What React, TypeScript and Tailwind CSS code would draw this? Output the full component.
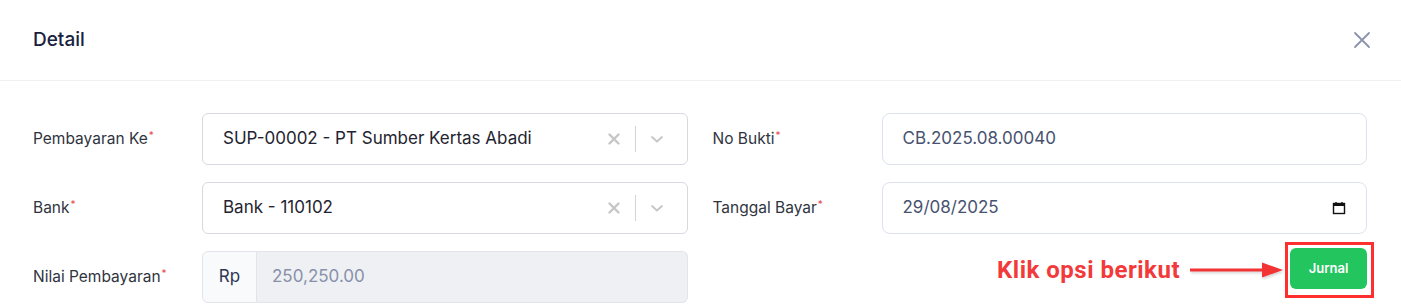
import React from "react";

const Label: React.FC<{ text: string }> = ({ text }) => (
  <div className="w-[169px] shrink-0 text-[15.5px] text-[#2f3440]">
    {text}
    <sup className="text-[#e5484d] text-[10px] ml-[1px]">*</sup>
  </div>
);

const SelectBox: React.FC<{ value: string }> = ({ value }) => (
  <div className="flex-1 h-[52px] flex items-center border border-[#d6d9df] rounded-md bg-white">
    <div className="flex-1 pl-[20px] text-[17px] text-[#1f2430]">{value}</div>
    <div className="flex items-center pr-[20px] text-[#c6c6c6]">
      <svg width="20" height="20" viewBox="0 0 20 20">
        <path
          d="M5.5 5.5l9 9M14.5 5.5l-9 9"
          stroke="currentColor"
          strokeWidth="2.4"
          strokeLinecap="round"
        />
      </svg>
      <div className="w-px h-[26px] bg-[#d4d4d4] mx-[11px]" />
      <svg width="20" height="20" viewBox="0 0 20 20">
        <path
          d="M5 8l5 4.5L15 8"
          stroke="currentColor"
          strokeWidth="1.8"
          fill="none"
          strokeLinecap="round"
          strokeLinejoin="round"
        />
      </svg>
    </div>
  </div>
);

const App: React.FC = () => {
  return (
    <div
      className="w-[1401px] h-[306px] bg-white overflow-hidden"
      style={{ fontFamily: "Inter, 'Noto Sans', sans-serif" }}
    >
      {/* Header */}
      <div className="h-[81px] flex items-center justify-between pl-[33px] pr-[27px] border-b border-[#eef0f3]">
        <h2 className="text-[19px] font-medium text-[#18213d]">Detail</h2>
        <svg width="24" height="24" viewBox="0 0 24 24" className="text-[#8a93ab]">
          <path
            d="M5 5l14 14M19 5L5 19"
            stroke="currentColor"
            strokeWidth="1.8"
            strokeLinecap="round"
          />
        </svg>
      </div>

      {/* Body */}
      <div className="pt-[32px] pl-[33px] pr-[34px] grid grid-cols-2 gap-x-[25px]">
        {/* Left column */}
        <div className="flex flex-col gap-[17px]">
          <div className="flex items-center">
            <Label text="Pembayaran Ke" />
            <SelectBox value="SUP-00002 - PT Sumber Kertas Abadi" />
          </div>
          <div className="flex items-center">
            <Label text="Bank" />
            <SelectBox value="Bank - 110102" />
          </div>
          <div className="flex items-center">
            <Label text="Nilai Pembayaran" />
            <div className="flex-1 h-[52px] flex">
              <div className="w-[55px] flex items-center justify-center bg-[#f9fafb] border border-[#e1e4ea] rounded-l-md text-[17px] text-[#2c3654]">
                Rp
              </div>
              <div className="flex-1 flex items-center pl-[15px] bg-[#eef0f4] border border-l-0 border-[#e1e4ea] rounded-r-md text-[17px] text-[#8891aa]">
                250,250.00
              </div>
            </div>
          </div>
        </div>

        {/* Right column */}
        <div className="flex flex-col gap-[17px]">
          <div className="flex items-center">
            <Label text="No Bukti" />
            <div className="flex-1 h-[52px] flex items-center pl-[20px] border border-[#dde2ec] rounded-lg text-[17px] text-[#475270]">
              CB.2025.08.00040
            </div>
          </div>
          <div className="flex items-center">
            <Label text="Tanggal Bayar" />
            <div className="flex-1 h-[52px] flex items-center justify-between pl-[20px] pr-[20px] border border-[#dde2ec] rounded-lg text-[17px] text-[#475270]">
              <span>29/08/2025</span>
              <svg width="14" height="14" viewBox="0 0 14 14">
                <rect x="1.5" y="2.5" width="11" height="10" fill="none" stroke="#111" strokeWidth="1.4" />
                <rect x="1.5" y="2.5" width="11" height="2.5" fill="#111" />
                <path d="M4 1v2M10 1v2" stroke="#111" strokeWidth="1.4" />
              </svg>
            </div>
          </div>
          <div className="flex justify-end -mt-[9px] -mr-[7px]">
            <div className="relative">
              <div className="border-[3px] border-[#ff2f2f] pt-[3px] pb-[6px] pl-[2px] pr-[4px]">
                <button className="w-[77px] h-[41px] rounded-md bg-[#22c55e] text-white text-[13px] font-semibold">
                  Jurnal
                </button>
              </div>
              {/* Annotation */}
              <div className="absolute right-full top-0 h-full flex items-center mr-[2px]">
                <span
                  className="text-[24px] font-bold text-[#f23a3a] whitespace-nowrap tracking-[0.5px]"
                  style={{ fontFamily: "Roboto, 'Liberation Sans', sans-serif" }}
                >
                  Klik opsi berikut
                </span>
                <svg width="93" height="20" viewBox="0 0 93 20" className="ml-[10px]" style={{ filter: "drop-shadow(1px 2px 1px rgba(0,0,0,0.15))" }}>
                  <rect x="0" y="8.5" width="74" height="3" fill="#f23434" />
                  <path d="M72 2.5L93 10L72 17.5Z" fill="#f23434" />
                </svg>
              </div>
            </div>
          </div>
        </div>
      </div>
    </div>
  );
};

export default App;
